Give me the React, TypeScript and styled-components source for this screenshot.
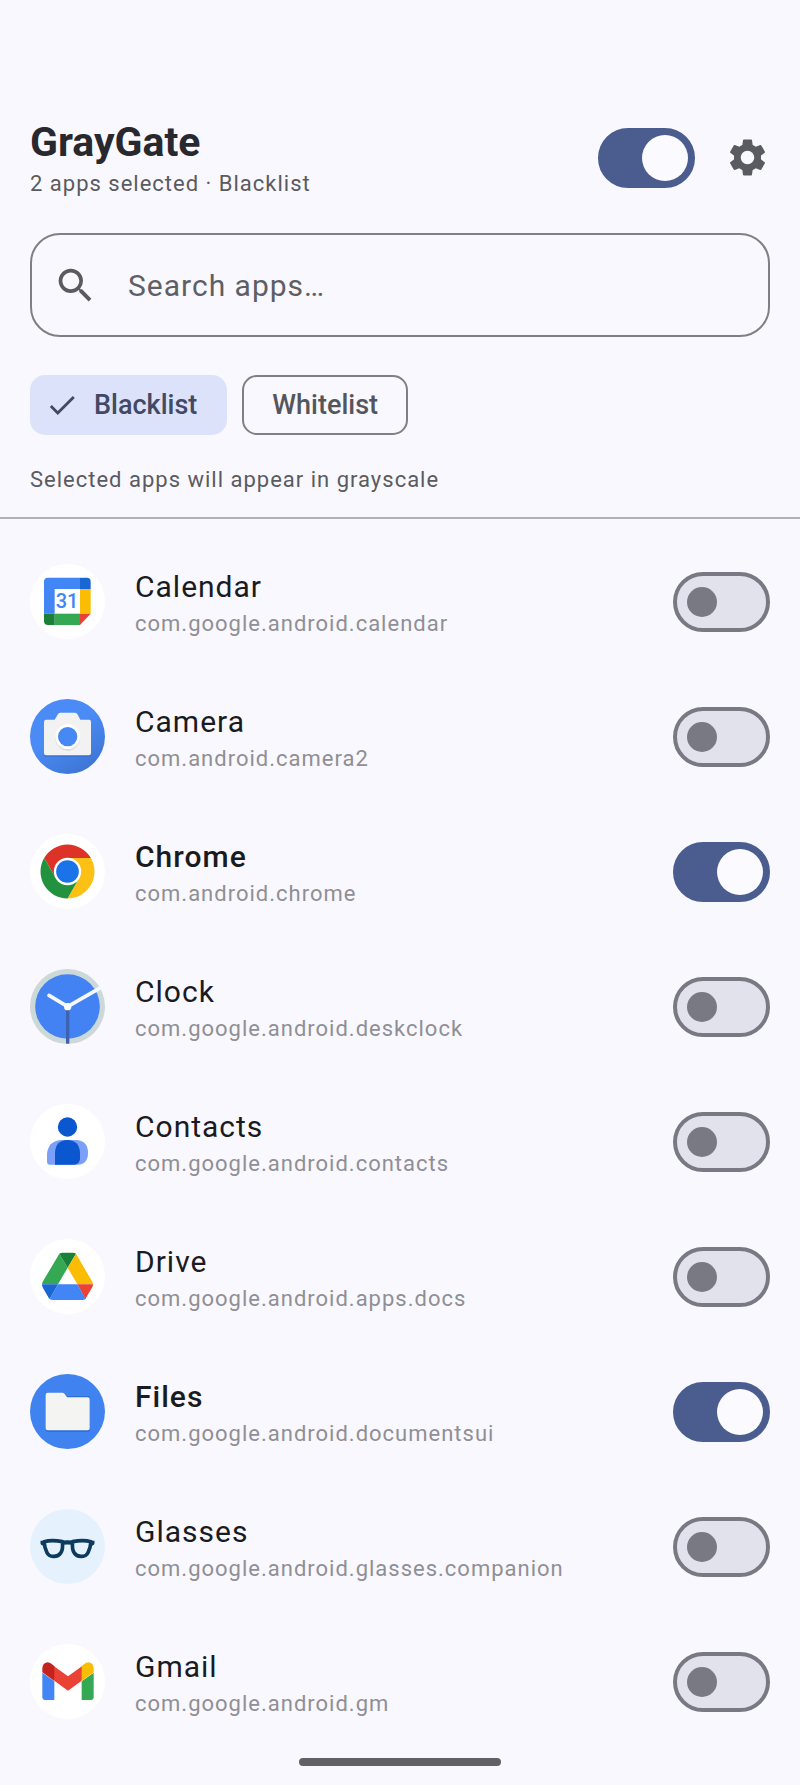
import React, { useState } from 'react';
import styled, { createGlobalStyle } from 'styled-components';
import { MdCheck, MdSearch, MdSettings } from 'react-icons/md';

const GlobalStyle = createGlobalStyle`
  * {
    box-sizing: border-box;
  }

  body {
    margin: 0;
    background-color: #f9f8fe;
    color: #1a1b21;
    font-family: Roboto, "Noto Sans", sans-serif;
  }
`;

const Screen = styled.div`
  display: flex;
  flex-direction: column;
  min-height: 100vh;
`;

const Header = styled.header`
  display: flex;
  flex-direction: column;
  padding: 116px 30px 22px;
  border-bottom: 2px solid #b0b0b6;
`;

const TitleBar = styled.div`
  display: flex;
  align-items: center;
  gap: 30px;
`;

const TitleGroup = styled.div`
  flex: 1;
  min-width: 0;
`;

const Title = styled.h1`
  margin: 0;
  font-size: 41px;
  font-weight: 700;
  line-height: 53px;
  color: #28292e;
`;

const BodySmall = styled.p`
  margin: 0;
  font-size: 22px;
  line-height: 30px;
  letter-spacing: 1px;
  color: #5a5b61;
`;

const Hint = styled(BodySmall)`
  margin-top: 30px;
`;

const IconButton = styled.button`
  display: flex;
  padding: 0;
  border: none;
  background: none;
  color: #5a5b61;
  font-size: 45px;
  cursor: pointer;
`;

const SearchBox = styled.label`
  display: flex;
  align-items: center;
  gap: 30px;
  height: 104px;
  margin-top: 34px;
  padding: 0 21px;
  border: 2px solid #7f7f85;
  border-radius: 30px;
  color: #5a5b61;
  font-size: 45px;
`;

const SearchInput = styled.input`
  flex: 1;
  min-width: 0;
  padding: 0;
  border: none;
  outline: none;
  background: none;
  color: #1a1b21;
  font-family: inherit;
  font-size: 30px;
  line-height: 45px;
  letter-spacing: 1px;

  &::placeholder {
    color: #5e5f65;
    opacity: 1;
  }
`;

const Chips = styled.div`
  display: flex;
  gap: 15px;
  margin-top: 38px;
`;

const Chip = styled.button<{ $active: boolean }>`
  display: flex;
  align-items: center;
  gap: 15px;
  height: 60px;
  padding: ${({ $active }) => ($active ? '0 30px 0 15px' : '0 28px')};
  border: ${({ $active }) => ($active ? 'none' : '2px solid #7f7f85')};
  border-radius: 15px;
  background-color: ${({ $active }) => ($active ? '#dce2f9' : 'transparent')};
  color: ${({ $active }) => ($active ? '#434965' : '#55565c')};
  font-family: inherit;
  font-size: 27px;
  font-weight: 500;
  cursor: pointer;

  svg {
    width: 34px;
    height: 34px;
  }
`;

const Switch = styled.input.attrs({ type: 'checkbox', role: 'switch' })`
  appearance: none;
  flex: none;
  display: flex;
  align-items: center;
  width: 97px;
  height: 60px;
  margin: 0;
  padding: 0 10px;
  border: 4px solid #787982;
  border-radius: 30px;
  background-color: #e2e2ec;
  cursor: pointer;

  &::before {
    content: '';
    width: 30px;
    height: 30px;
    border-radius: 50%;
    background-color: #787982;
  }

  &:checked {
    justify-content: flex-end;
    padding: 0 3px;
    border-color: #4a5d8e;
    background-color: #4a5d8e;
  }

  &:checked::before {
    width: 46px;
    height: 46px;
    background-color: #fbfaff;
  }
`;

const AppList = styled.ul`
  flex: 1;
  margin: 0;
  padding: 15px 0 0;
  list-style: none;
`;

const AppRow = styled.li`
  display: flex;
  align-items: center;
  gap: 30px;
  padding: 30px;
`;

const AppIcon = styled.svg`
  flex: none;
  width: 75px;
  height: 75px;
`;

const AppLabel = styled.label`
  flex: 1;
  min-width: 0;
  cursor: pointer;
`;

const AppName = styled.span<{ $selected: boolean }>`
  display: block;
  font-size: 30px;
  font-weight: ${({ $selected }) => ($selected ? 500 : 400)};
  line-height: 45px;
  letter-spacing: 1px;
`;

const PackageName = styled(BodySmall).attrs({ as: 'span' })`
  display: block;
  color: #8f8f95;
`;

const NavBar = styled.footer`
  display: flex;
  justify-content: center;
  padding: 8px 0 19px;
`;

const NavHandle = styled.div`
  width: 202px;
  height: 8px;
  border-radius: 4px;
  background-color: #626266;
`;

const CalendarIcon = () => (
  <>
    <circle cx="112.5" cy="112.5" r="112.5" fill="#fff" />
    <path d="M54 41H150V75H74V149H42V53Q42 41 54 41Z" fill="#4285f4" />
    <path d="M150 41H170Q182 41 182 53V75H150Z" fill="#1967d2" />
    <path d="M150 75H182V149H150Z" fill="#fbbc04" />
    <path d="M74 149H150V183H74Z" fill="#34a853" />
    <path d="M42 149H74V183H54Q42 183 42 171Z" fill="#188038" />
    <path d="M150 149H182L150 183Z" fill="#ea4335" />
    <text
      x="111"
      y="133"
      textAnchor="middle"
      fontFamily="Roboto, sans-serif"
      fontSize="60"
      fontWeight="500"
      fill="#4285f4"
    >
      31
    </text>
  </>
);

const CameraIcon = () => (
  <>
    <defs>
      <linearGradient id="cameraShade" x1="0.3" y1="0.2" x2="0.8" y2="1">
        <stop offset="0.3" stopColor="#4b8bf5" />
        <stop offset="1" stopColor="#3c73d0" />
      </linearGradient>
    </defs>
    <circle cx="112.5" cy="112.5" r="112.5" fill="url(#cameraShade)" />
    <path
      d="M48 65H74L84 48Q87 44 92 44H134Q139 44 142 48L151 65H177Q183 65 183 71V167Q183 173 177 173H48Q42 173 42 167V71Q42 65 48 65Z"
      fill="#2d62c0"
      opacity="0.5"
    />
    <path
      d="M48 62H74L84 45Q87 41 92 41H134Q139 41 142 45L151 62H177Q183 62 183 68V163Q183 169 177 169H48Q42 169 42 163V68Q42 62 48 62Z"
      fill="#f2f2f2"
    />
    <circle cx="113" cy="118" r="37" fill="#dcdcdc" />
    <circle cx="113" cy="113" r="37" fill="#fff" />
    <circle cx="113" cy="113" r="29" fill="#4688f4" />
  </>
);

const ChromeIcon = () => (
  <>
    <circle cx="112.5" cy="112.5" r="112.5" fill="#fff" />
    <g transform="translate(112.5 112.5)">
      <path d="M-70.1-40.5A81 81 0 0 1 70.1-40.5H0L-34.6 20Z" fill="#dc3227" />
      <path d="M70.1-40.5A81 81 0 0 1 0 81L34.6 20L0-40.5Z" fill="#fdc116" />
      <path d="M0 81A81 81 0 0 1-70.1-40.5L-34.6 20H34.6Z" fill="#23923f" />
      <circle r="41" fill="#fff" />
      <circle r="34" fill="#1a73e8" />
    </g>
  </>
);

const ClockIcon = () => (
  <>
    <circle cx="112.5" cy="112.5" r="112.5" fill="#cdd8d8" />
    <circle cx="112.5" cy="112.5" r="97" fill="#4382f2" />
    <path d="M113 113V224" stroke="#3c62b0" strokeWidth="10" />
    <path d="M57 79L113 113L208 58" fill="none" stroke="#f5f8fa" strokeWidth="11" strokeLinecap="round" />
    <circle cx="113" cy="113" r="11" fill="#fff" />
  </>
);

const ContactsIcon = () => (
  <>
    <circle cx="112.5" cy="112.5" r="112.5" fill="#fff" />
    <circle cx="112.5" cy="69" r="29" fill="#0b57d0" />
    <path d="M92 108H137Q174 110 174 146Q174 182 142 182H60Q51 182 51 173V152Q53 112 92 108Z" fill="#7c9ffa" />
    <path d="M75 182V146Q77 109 112 108Q148 109 150 146V165Q148 180 134 182Z" fill="#0b57d0" />
  </>
);

const DriveIcon = () => (
  <>
    <circle cx="112.5" cy="112.5" r="112.5" fill="#fff" />
    <path d="M88 44L113 86L84 136H36Q36 131 39 127Z" fill="#34a853" />
    <path d="M88 44Q92 41 98 41H128Q135 41 138 44L113 86Z" fill="#188038" />
    <path d="M138 44L186 127Q189 131 189 136H142L113 86Z" fill="#fbbc04" />
    <path d="M142 136H189Q189 141 186 146L169 175Q168 178 166 180Z" fill="#ea4335" />
    <path d="M84 136H142L167 180Q163 183 157 183H68Q63 183 59 180Z" fill="#4285f4" />
    <path d="M36 136H84L59 180Q57 178 55 175L39 147Q36 142 36 136Z" fill="#1967d2" />
  </>
);

const FilesIcon = () => (
  <>
    <circle cx="112.5" cy="112.5" r="112.5" fill="#4082f0" />
    <path d="M48 66H179V168Q179 174 173 174H54Q48 174 48 168Z" fill="#2560c4" opacity="0.6" />
    <path
      d="M53 56H97Q101 56 104 60L111 70H173Q179 70 179 76V163Q179 169 173 169H53Q47 169 47 163V62Q47 56 53 56Z"
      fill="#f4f4f2"
    />
  </>
);

const GlassesIcon = () => (
  <>
    <circle cx="112.5" cy="112.5" r="112.5" fill="#e6f1fe" />
    <g fill="none" stroke="#0d3b5e" strokeWidth="11" strokeLinejoin="round">
      <path d="M42 98Q66 92 97 98Q100 120 92 132Q86 142 72 142Q56 143 51 131Q44 118 42 98Z" />
      <path d="M183 98Q159 92 128 98Q125 120 133 132Q139 142 153 142Q169 143 174 131Q181 118 183 98Z" />
      <path d="M37 95V103L43 106M188 95V103L182 106" />
      <path d="M97 101Q112 99 128 101" strokeWidth="13" />
    </g>
  </>
);

const GmailIcon = () => (
  <>
    <circle cx="112.5" cy="112.5" r="112.5" fill="#fff" />
    <path d="M37 86L73 112V168H46Q37 168 37 159Z" fill="#4285f4" />
    <path d="M191 86L155 112V168H182Q191 168 191 159Z" fill="#34a853" />
    <path d="M66 62L114 97L162 62L155 110L114 140L73 110Z" fill="#ea4335" />
    <path d="M73 67V111L37 85V73Q38 57 52 55Q60 55 66 61Z" fill="#c5221f" />
    <path d="M155 67V111L191 85V73Q190 57 176 55Q168 55 162 61Z" fill="#fbbc04" />
  </>
);

const apps = [
  { name: 'Calendar', pkg: 'com.google.android.calendar', Icon: CalendarIcon },
  { name: 'Camera', pkg: 'com.android.camera2', Icon: CameraIcon },
  { name: 'Chrome', pkg: 'com.android.chrome', Icon: ChromeIcon },
  { name: 'Clock', pkg: 'com.google.android.deskclock', Icon: ClockIcon },
  { name: 'Contacts', pkg: 'com.google.android.contacts', Icon: ContactsIcon },
  { name: 'Drive', pkg: 'com.google.android.apps.docs', Icon: DriveIcon },
  { name: 'Files', pkg: 'com.google.android.documentsui', Icon: FilesIcon },
  { name: 'Glasses', pkg: 'com.google.android.glasses.companion', Icon: GlassesIcon },
  { name: 'Gmail', pkg: 'com.google.android.gm', Icon: GmailIcon },
];

const modes = ['Blacklist', 'Whitelist'];

const App: React.FC = () => {
  const [enabled, setEnabled] = useState(true);
  const [mode, setMode] = useState('Blacklist');
  const [query, setQuery] = useState('');
  const [selected, setSelected] = useState<string[]>(['com.android.chrome', 'com.google.android.documentsui']);

  const toggleApp = (pkg: string) => {
    setSelected((prev) => (prev.includes(pkg) ? prev.filter((p) => p !== pkg) : [...prev, pkg]));
  };

  const visibleApps = apps.filter((app) => app.name.toLowerCase().includes(query.toLowerCase()));

  return (
    <Screen>
      <GlobalStyle />
      <Header>
        <TitleBar>
          <TitleGroup>
            <Title>GrayGate</Title>
            <BodySmall>{`${selected.length} apps selected · ${mode}`}</BodySmall>
          </TitleGroup>
          <Switch aria-label="GrayGate" checked={enabled} onChange={() => setEnabled(!enabled)} />
          <IconButton type="button" aria-label="Settings">
            <MdSettings />
          </IconButton>
        </TitleBar>

        <SearchBox>
          <MdSearch />
          <SearchInput
            type="text"
            aria-label="Search apps"
            placeholder="Search apps…"
            value={query}
            onChange={(e) => setQuery(e.target.value)}
          />
        </SearchBox>

        <Chips>
          {modes.map((item) => (
            <Chip
              key={item}
              type="button"
              $active={item === mode}
              aria-pressed={item === mode}
              onClick={() => setMode(item)}
            >
              {item === mode && <MdCheck />}
              {item}
            </Chip>
          ))}
        </Chips>

        <Hint>
          {mode === 'Blacklist' ? 'Selected apps will appear in grayscale' : 'Selected apps will stay in color'}
        </Hint>
      </Header>

      <AppList>
        {visibleApps.map(({ name, pkg, Icon }) => (
          <AppRow key={pkg}>
            <AppIcon viewBox="0 0 225 225" aria-hidden="true">
              <Icon />
            </AppIcon>
            <AppLabel htmlFor={pkg}>
              <AppName $selected={selected.includes(pkg)}>{name}</AppName>
              <PackageName>{pkg}</PackageName>
            </AppLabel>
            <Switch id={pkg} checked={selected.includes(pkg)} onChange={() => toggleApp(pkg)} />
          </AppRow>
        ))}
      </AppList>

      <NavBar>
        <NavHandle />
      </NavBar>
    </Screen>
  );
};

export default App;
